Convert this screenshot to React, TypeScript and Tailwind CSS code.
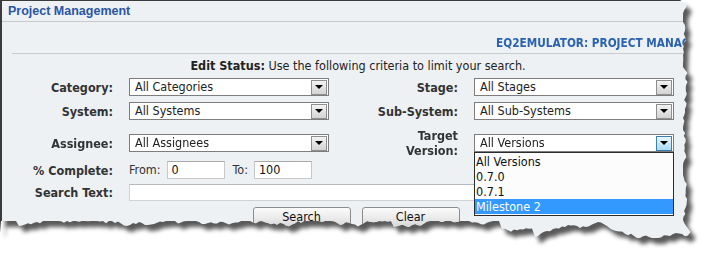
import React from "react";

// jagged "torn paper" outline used to clip the panel
function tornEdge(): string {
  let seed = 7;
  const rand = () => {
    seed = (seed * 9301 + 49297) % 233280;
    return seed / 233280;
  };
  const pts: string[] = ["0px 0px", "680px 0px"];
  let x = 686;
  for (let y = 4; y <= 234; y += 3) {
    x += (rand() - 0.5) * 5;
    if (x < 683) x = 683;
    if (x > 697) x = 697;
    pts.push(`${x.toFixed(1)}px ${y}px`);
  }
  let y = 234;
  for (let px = Math.round(x) - 3; px >= 0; px -= 3) {
    y += (rand() - 0.5) * 4.5;
    if (rand() > 0.93) y -= 7;
    if (y < 221) y = 221;
    if (y > 238) y = 238;
    pts.push(`${px}px ${y.toFixed(1)}px`);
  }
  pts.push("0px 233px");
  return `polygon(${pts.join(",")})`;
}

const CLIP = tornEdge();

function Arrow() {
  return <span className="h-0 w-0 border-x-[4px] border-t-[4px] border-x-transparent border-t-black" />;
}

function Select({ value, active, children }: { value: string; active?: boolean; children?: React.ReactNode }) {
  return (
    <div className="relative flex h-[18px] w-[200px] items-center border border-[#7d7d7d] bg-white">
      <span className="pl-[5px] text-[12.5px] leading-none text-[#222]">{value}</span>
      <span
        className={
          active
            ? "ml-auto mr-px flex h-[15px] w-[16px] items-center justify-center border border-[#3c7fb1] bg-gradient-to-b from-[#eaf6fd] to-[#a9daf5]"
            : "ml-auto mr-px flex h-[15px] w-[16px] items-center justify-center border border-[#8e8e8e] bg-gradient-to-b from-[#f3f3f3] to-[#d3d3d3]"
        }
      >
        <Arrow />
      </span>
      {children}
    </div>
  );
}

function Label({ text, w }: { text: React.ReactNode; w: string }) {
  return <div className={`${w} text-right text-[12.5px] font-bold leading-[15px] text-[#333]`}>{text}</div>;
}

export default function App() {
  const versions = ["All Versions", "0.7.0", "0.7.1", "Milestone 2"];

  return (
    <div
      className="h-[257px] w-[707px] overflow-hidden bg-white"
      style={{ fontFamily: '"DejaVu Sans Condensed", "DejaVu Sans", sans-serif' }}
    >
      <div className="drop-shadow-[5px_6px_2px_rgba(0,0,0,0.65)]">
        <div className="h-[245px] w-[714px] border-t border-l-2 border-[#3b3b3b] bg-[#edf1f4]" style={{ clipPath: CLIP }}>
          {/* Header */}
          <div
            className="flex h-[21px] items-center border-b border-[#c6cacd] pl-[6px] text-[12.5px] font-bold text-[#2a55a4]"
            style={{ fontFamily: '"Liberation Sans", Arial, sans-serif' }}
          >
            Project Management
          </div>
          {/* Title */}
          <div className="flex h-[31px] items-end pb-[2px]">
            <div
              className="origin-left scale-x-[0.9] whitespace-nowrap pl-[549px] text-[13px] font-bold leading-[16px] text-[#2a62b0]"
              style={{ fontFamily: '"DejaVu Sans Condensed", "DejaVu Sans", sans-serif' }}
            >
              EQ2EMULATOR: PROJECT MANAGEMENT
            </div>
          </div>
          <div className="ml-[10px] h-px bg-[#c9cccf]" />

          {/* Form */}
          <div className="mt-[5px] h-[14px] text-center text-[12.5px] leading-[14px] text-[#222]">
            <span className="font-bold">Edit Status:</span> Use the following criteria to limit your search.
          </div>

          <div className="mt-[5px] flex items-center">
            <Label w="w-[111px]" text="Category:" />
            <div className="ml-4"><Select value="All Categories" /></div>
            <Label w="w-[129px]" text="Stage:" />
            <div className="ml-4"><Select value="All Stages" /></div>
          </div>

          <div className="mt-[6px] flex items-center">
            <Label w="w-[111px]" text="System:" />
            <div className="ml-4"><Select value="All Systems" /></div>
            <Label w="w-[129px]" text="Sub-System:" />
            <div className="ml-4"><Select value="All Sub-Systems" /></div>
          </div>

          <div className="relative z-10 mt-[8px] flex items-center">
            <Label w="w-[111px]" text="Assignee:" />
            <div className="ml-4"><Select value="All Assignees" /></div>
            <Label w="w-[129px]" text={<>Target<br />Version:</>} />
            <div className="ml-4">
              <Select value="All Versions" active>
                <div className="absolute left-[-1px] top-[17px] w-[200px] border border-[#2c2c2c] bg-[#fcfcfc] py-px">
                  {versions.map((v) => (
                    <div
                      key={v}
                      className={
                        v === "Milestone 2"
                          ? "h-[15px] bg-[#3399ff] pl-px text-[12.5px] leading-[15px] text-white"
                          : "h-[15px] pl-px text-[12.5px] leading-[15px] text-[#111]"
                      }
                    >
                      {v}
                    </div>
                  ))}
                </div>
              </Select>
            </div>
          </div>

          <div className="mt-[3px] flex items-center">
            <Label w="w-[111px]" text="% Complete:" />
            <div className="ml-4 flex items-center text-[12.5px] text-[#333]">
              <span>From:</span>
              <span className="ml-[6px] flex h-[18px] w-[58px] items-center border border-[#c8c8c8] border-t-[#a9a9a9] bg-white pl-[4px] text-[#111]">0</span>
              <span className="ml-[8px]">To:</span>
              <span className="ml-[6px] flex h-[18px] w-[58px] items-center border border-[#c8c8c8] border-t-[#a9a9a9] bg-white pl-[4px] text-[#111]">100</span>
            </div>
          </div>

          <div className="mt-[4px] flex items-center">
            <Label w="w-[111px]" text="Search Text:" />
            <div className="ml-4 h-[17px] w-[544px] border border-[#cfd3d6] border-t-[#b6b9bc] bg-white" />
          </div>

          <div className="mt-[6px] flex justify-center gap-[11px] pr-[4px]">
            <button className="h-[21px] w-[98px] rounded-[3px] border border-[#8c8c8c] bg-gradient-to-b from-[#fbfbfb] via-[#ececec] to-[#d6d6d6] text-[12.5px] leading-none text-[#111]">
              Search
            </button>
            <button className="h-[21px] w-[98px] rounded-[3px] border border-[#8c8c8c] bg-gradient-to-b from-[#fbfbfb] via-[#ececec] to-[#d6d6d6] text-[12.5px] leading-none text-[#111]">
              Clear
            </button>
          </div>
        </div>
      </div>
    </div>
  );
}
